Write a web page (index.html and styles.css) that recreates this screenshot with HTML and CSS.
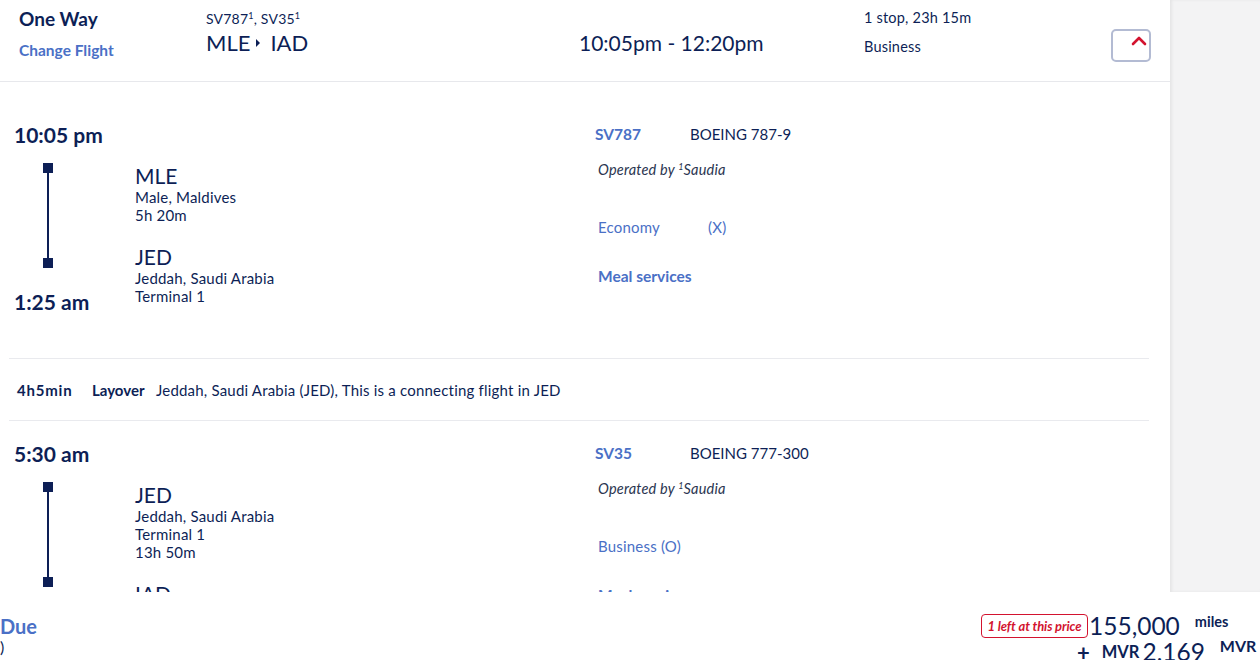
FILE: index.html
```html
<!DOCTYPE html>
<html lang="en">
<head>
<meta charset="utf-8">
<title>Flight details</title>
<link rel="stylesheet" href="styles.css">
</head>
<body>
<div class="page">
  <div class="viewport">
    <main class="card">
      <header class="summary">
        <div class="s-trip">
          <div class="trip-type">One Way</div>
          <a class="change">Change Flight</a>
        </div>
        <div class="s-route">
          <div class="flights">SV787<sup>1</sup>, SV35<sup>1</sup></div>
          <div class="route">MLE<span class="tri"></span>IAD</div>
        </div>
        <div class="s-time">10:05pm - 12:20pm</div>
        <div class="s-info">
          <div>1 stop, 23h 15m</div>
          <div class="cabin">Business</div>
        </div>
        <button class="toggle" aria-label="Collapse">
          <svg width="18" height="12" viewBox="0 0 18 12"><path d="M3 9 L9 3 L15 9" fill="none" stroke="#d3132f" stroke-width="2.6" stroke-linecap="round" stroke-linejoin="round"/></svg>
        </button>
      </header>

      <section class="segment first">
        <div class="seg-left">
          <div class="t-dep">10:05 pm</div>
          <div class="rail"><span class="sq"></span><span class="line"></span><span class="sq"></span></div>
          <div class="stops">
            <div class="stop">
              <div class="code">MLE</div>
              <div class="det">Male, Maldives</div>
              <div class="det">5h 20m</div>
            </div>
            <div class="stop">
              <div class="code">JED</div>
              <div class="det">Jeddah, Saudi Arabia</div>
              <div class="det">Terminal 1</div>
            </div>
          </div>
          <div class="t-arr">1:25 am</div>
        </div>
        <div class="seg-right">
          <div class="fl"><span class="fno">SV787</span><span class="plane">BOEING 787-9</span></div>
          <div class="op">Operated by <sup>1</sup>Saudia</div>
          <div class="cls"><span class="cls-name">Economy</span>(X)</div>
          <div class="meal">Meal services</div>
        </div>
      </section>

      <div class="layover">
        <span class="lay-dur">4h5min</span>
        <span class="lay-lbl">Layover</span>
        <span class="lay-txt">Jeddah, Saudi Arabia (JED), This is a connecting flight in JED</span>
      </div>

      <section class="segment">
        <div class="seg-left">
          <div class="t-dep">5:30 am</div>
          <div class="rail"><span class="sq"></span><span class="line"></span><span class="sq"></span></div>
          <div class="stops">
            <div class="stop">
              <div class="code">JED</div>
              <div class="det">Jeddah, Saudi Arabia</div>
              <div class="det">Terminal 1</div>
              <div class="det">13h 50m</div>
            </div>
            <div class="stop">
              <div class="code">IAD</div>
              <div class="det">Washington, United States</div>
              <div class="det">Terminal 1</div>
            </div>
          </div>
          <div class="t-arr">12:20 pm</div>
        </div>
        <div class="seg-right">
          <div class="fl"><span class="fno">SV35</span><span class="plane">BOEING 777-300</span></div>
          <div class="op">Operated by <sup>1</sup>Saudia</div>
          <div class="cls">Business (O)</div>
          <div class="meal">Meal services</div>
        </div>
      </section>
    </main>
    <aside class="side"></aside>
  </div>

  <footer class="bar">
    <div class="due">
      <div class="due-title">Due</div>
      <div class="due-sub">)</div>
    </div>
    <div class="price">
      <div class="p-row">
        <span class="badge">1 left at this price</span>
        <span class="amt">155,000</span>
        <span class="unit">miles</span>
      </div>
      <div class="p-row second">
        <span class="plus">+</span>
        <span class="cur">MVR</span>
        <span class="amt">2,169</span>
        <span class="unit cur2">MVR</span>
      </div>
    </div>
  </footer>
</div>
</body>
</html>
```

FILE: styles.css
```css
* { box-sizing: border-box; }
html, body { margin: 0; padding: 0; }
body {
  font-family: Lato, "Liberation Sans", sans-serif;
  color: #0d1f56;
  background: #ffffff;
  width: 1260px;
  height: 660px;
  overflow: hidden;
}
.page { display: flex; flex-direction: column; height: 660px; }
.viewport { display: flex; height: 592px; overflow: hidden; }
.card { width: 1170px; flex: none; background: #fff; }
.side { flex: 1; background: #f3f3f4; box-shadow: inset 2px 0 3px rgba(0,0,0,0.06); }

/* summary header */
.summary {
  display: grid;
  grid-template-columns: 187px 373px 285px 247px 40px;
  padding-left: 19px;
  height: 82px;
  border-bottom: 1px solid #e7e8ec;
  margin-bottom: 20px;
}
.s-trip { padding-top: 8px; }
.trip-type { font-size: 19px; font-weight: 700; line-height: 22px; }
.change { display: block; margin-top: 9px; font-size: 15.5px; font-weight: 700; line-height: 22px; color: #4a70c6; }
.s-route { padding-top: 10px; }
.flights { font-size: 14px; line-height: 18px; letter-spacing: 0.2px; }
.flights sup { font-size: 9px; vertical-align: 5px; line-height: 0; }
.route { font-size: 22px; line-height: 30px; display: flex; align-items: center; }
.tri {
  display: inline-block; width: 0; height: 0; margin: 0 10px 0 6px;
  border-top: 4px solid transparent; border-bottom: 4px solid transparent; border-left: 4px solid #0d1f56;
}
.s-time { padding-top: 28px; font-size: 21px; line-height: 30px; }
.s-info { padding-top: 8px; font-size: 14.5px; line-height: 20px; letter-spacing: 0.2px; }
.cabin { margin-top: 9px; }
.toggle {
  margin-top: 29px; width: 40px; height: 33px; padding: 0;
  border: 2px solid #b3bbd3; border-radius: 5px; background: #fff;
  display: flex; justify-content: flex-end; align-items: flex-start;
}
.toggle svg { margin: 4px 1px 0 0; }

/* segments */
.segment {
  display: grid;
  grid-template-columns: 581px 1fr;
  padding: 21px 0 44px 14px;
}
.seg-left {
  display: grid;
  grid-template-columns: 121px 1fr;
  grid-template-rows: auto auto auto;
  align-items: start;
}
.t-dep, .t-arr { font-size: 21px; font-weight: 700; line-height: 24px; white-space: nowrap; }
.t-dep { grid-column: 1; grid-row: 1; margin-bottom: 16px; }
.rail {
  grid-column: 1; grid-row: 2;
  margin-left: 29px; width: 10px; height: 105px;
  display: flex; flex-direction: column; align-items: center;
}
.sq { width: 10px; height: 10px; background: #0d1f56; flex: none; }
.line { width: 2px; flex: 1; background: #0d1f56; }
.stops { grid-column: 2; grid-row: 2 / span 2; margin-top: 1px; }
.stop + .stop { margin-top: 21px; }
.code { font-size: 21px; line-height: 24px; }
.det { font-size: 15px; line-height: 18px; letter-spacing: 0.2px; }
.t-arr { grid-column: 1; grid-row: 3; margin-top: 22px; }

.seg-right { font-size: 15px; }
.fl { line-height: 22px; display: flex; }
.fno { width: 95px; font-size: 15.5px; font-weight: 700; color: #4a70c6; }
.plane { font-size: 15px; }
.op { margin-top: 15px; padding-left: 3px; line-height: 20px; font-style: italic; color: #2a3550; font-size: 14.5px; letter-spacing: 0.2px; }
.op sup { font-size: 9px; vertical-align: 5px; line-height: 0; }
.cls { margin-top: 37px; padding-left: 3px; line-height: 20px; color: #4a70c6; font-size: 15px; letter-spacing: 0.2px; }
.cls-name { display: inline-block; width: 110px; }
.meal { margin-top: 28px; padding-left: 3px; line-height: 22px; font-size: 15.5px; font-weight: 700; color: #4a70c6; }

/* layover */
.layover {
  margin: 0 21px 0 9px;
  border-top: 1px solid #e9eaee;
  border-bottom: 1px solid #e9eaee;
  padding: 21px 0 20px 8px;
  line-height: 20px;
  font-size: 15px;
  letter-spacing: 0.2px;
  display: flex;
}
.lay-dur { font-weight: 700; width: 75px; letter-spacing: 0.8px; }
.lay-lbl { font-weight: 700; width: 64px; letter-spacing: 0; }

/* footer */
.bar {
  height: 68px; background: #fff;
  display: flex; justify-content: space-between;
  overflow: hidden;
}
.due { padding-top: 22px; }
.due-title { font-size: 20px; font-weight: 700; line-height: 24px; color: #4a70c6; }
.due-sub { font-size: 16px; line-height: 18px; }
.price { width: 279px; padding-top: 19px; }
.p-row { display: flex; align-items: center; height: 30px; white-space: nowrap; }
.badge {
  border: 1px solid #d3132f; border-radius: 4px;
  color: #d3132f; font-size: 13px; font-weight: 700; font-style: italic;
  height: 24px; line-height: 22px; padding: 0 2px; width: 107px; text-align: center;
  letter-spacing: -0.1px;
}
.amt { font-size: 24.5px; line-height: 30px; margin-left: 1px; }
.unit { font-size: 14.5px; font-weight: 700; margin-left: 15px; align-self: flex-start; line-height: 22px; }
.second { margin-top: -4px; padding-left: 96px; }
.plus { font-size: 22px; font-weight: 700; }
.cur { font-size: 16.5px; font-weight: 700; margin-left: 12px; margin-right: 2px; }
.cur2 { line-height: 18px; font-size: 16px; }
```
